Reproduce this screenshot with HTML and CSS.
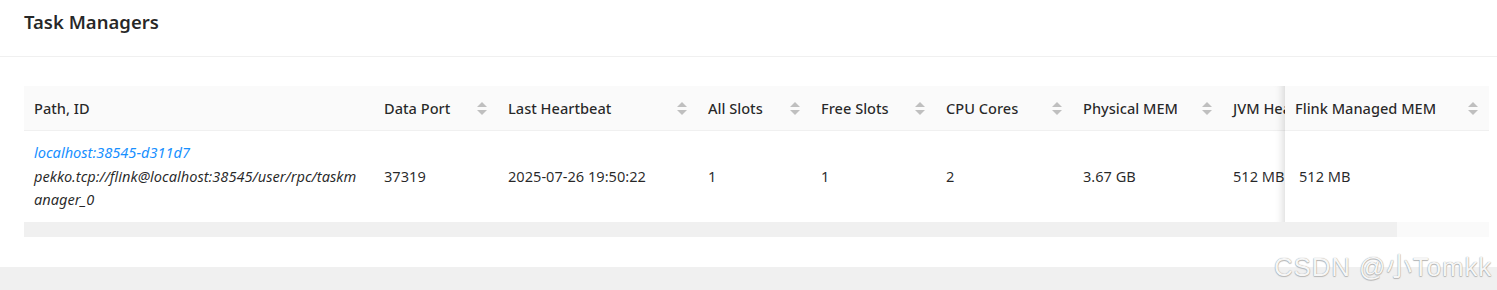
FILE: index.html
```html
<!DOCTYPE html>
<html lang="en">
<head>
<meta charset="utf-8">
<title>Task Managers</title>
<link rel="stylesheet" href="styles.css">
</head>
<body>
<div class="card">
  <div class="card-head"><h2 class="card-title">Task Managers</h2></div>
  <div class="card-body">
    <div class="table-wrap">
      <div class="table-scroll">
        <table class="tm-table">
          <colgroup>
            <col class="c-path"><col class="c-port"><col class="c-hb"><col class="c-all"><col class="c-free"><col class="c-cpu"><col class="c-phys"><col class="c-jvm"><col class="c-flink">
          </colgroup>
          <thead>
            <tr>
              <th><div class="th-in"><span>Path, ID</span></div></th>
              <th><div class="th-in"><span>Data Port</span><span class="sorter"><i class="up"></i><i class="down"></i></span></div></th>
              <th><div class="th-in"><span>Last Heartbeat</span><span class="sorter"><i class="up"></i><i class="down"></i></span></div></th>
              <th><div class="th-in"><span>All Slots</span><span class="sorter"><i class="up"></i><i class="down"></i></span></div></th>
              <th><div class="th-in"><span>Free Slots</span><span class="sorter"><i class="up"></i><i class="down"></i></span></div></th>
              <th><div class="th-in"><span>CPU Cores</span><span class="sorter"><i class="up"></i><i class="down"></i></span></div></th>
              <th><div class="th-in"><span>Physical MEM</span><span class="sorter"><i class="up"></i><i class="down"></i></span></div></th>
              <th><div class="th-in"><span>JVM Heap Size</span><span class="sorter"><i class="up"></i><i class="down"></i></span></div></th>
              <th class="fix-right"><div class="th-in"><span>Flink Managed MEM</span><span class="sorter"><i class="up"></i><i class="down"></i></span></div></th>
            </tr>
          </thead>
          <tbody>
            <tr>
              <td class="path"><a class="tm-link">localhost:38545-d311d7</a><div class="tm-addr">pekko.tcp://flink@localhost:38545/user/rpc/taskmanager_0</div></td>
              <td>37319</td>
              <td>2025-07-26 19:50:22</td>
              <td>1</td>
              <td>1</td>
              <td>2</td>
              <td>3.67 GB</td>
              <td>512 MB</td>
              <td class="fix-right">512 MB</td>
            </tr>
          </tbody>
        </table>
      </div>
      <div class="hscroll"><div class="hscroll-thumb"></div></div>
    </div>
  </div>
</div>
<div class="watermark">CSDN @小Tomkk</div>
</body>
</html>
```

FILE: styles.css
```css
html, body {
  margin: 0;
  padding: 0;
}
body {
  background: #f0f0f0;
  font-family: "Noto Sans", "Open Sans", sans-serif;
  color: rgba(0, 0, 0, 0.85);
  width: 1497px;
  height: 290px;
  overflow: hidden;
  position: relative;
}
.card {
  background: #fff;
  width: 1497px;
}
.card-head {
  height: 57px;
  border-bottom: 1px solid #f0f0f0;
  display: flex;
  align-items: center;
  padding: 0 24px;
  box-sizing: border-box;
}
.card-title {
  margin: 0;
  font-size: 18.5px;
  font-weight: 600;
  color: rgba(0, 0, 0, 0.85);
  line-height: 1;
  padding-bottom: 11px;
}
.card-body {
  padding: 29px 8px 30px 24px;
}
.table-wrap {
  width: 1465px;
}
.table-scroll {
  overflow: hidden;
  width: 100%;
}
.tm-table {
  table-layout: fixed;
  border-collapse: separate;
  border-spacing: 0;
  width: 1553px;
  font-size: 14.6px;
  line-height: 23.5px;
}
.c-path { width: 350px; }
.c-port { width: 124px; }
.c-hb { width: 200px; }
.c-all { width: 113px; }
.c-free { width: 125px; }
.c-cpu { width: 137px; }
.c-phys { width: 150px; }
.c-jvm { width: 150px; }
.c-flink { width: 204px; }

.tm-table th {
  background: #fafafa;
  font-weight: 500;
  text-align: left;
  padding: 10px 10px;
  line-height: 24px;
  border-bottom: 1px solid #f0f0f0;
  position: relative;
  white-space: nowrap;
  overflow: hidden;
}
.tm-table th + th::before {
  content: "";
  position: absolute;
  left: -1px;
  top: 50%;
  width: 1px;
  height: 23px;
  transform: translateY(-50%);
  background: rgba(0, 0, 0, 0.06);
}
.th-in {
  display: flex;
  align-items: center;
  justify-content: space-between;
}
.sorter {
  display: flex;
  flex-direction: column;
  align-items: center;
  gap: 3px;
  width: 10px;
  margin-right: 1px;
  flex: none;
}
.sorter i {
  display: block;
  width: 0;
  height: 0;
  border-left: 5px solid transparent;
  border-right: 5px solid transparent;
}
.sorter .up { border-bottom: 5px solid #bfbfbf; }
.sorter .down { border-top: 5px solid #bfbfbf; }

.tm-table td {
  padding: 10px 10px;
  vertical-align: middle;
  background: #fff;
  white-space: nowrap;
  overflow: hidden;
}
.tm-table td.path {
  white-space: normal;
  font-style: italic;
  overflow-wrap: anywhere;
}
.tm-link {
  color: #1890ff;
  display: block;
}
.tm-addr {
  word-break: break-all;
}
.tm-table .fix-right {
  position: sticky;
  right: 0;
  z-index: 2;
  overflow: visible;
}
.tm-table td.fix-right {
  padding-left: 14px;
}
.tm-table .fix-right::before {
  display: none;
}
.tm-table .fix-right::after {
  content: "";
  position: absolute;
  top: 0;
  bottom: -1px;
  left: 0;
  width: 30px;
  transform: translateX(-100%);
  box-shadow: inset -10px 0 8px -8px rgba(0, 0, 0, 0.15);
  pointer-events: none;
}
.hscroll {
  height: 15px;
  background: #fafafa;
}
.hscroll-thumb {
  width: 1373px;
  height: 100%;
  background: #f0f0f0;
}
.watermark {
  position: absolute;
  right: 5px;
  bottom: 7px;
  font-family: "Liberation Sans", "Noto Sans CJK SC", sans-serif;
  font-size: 26px;
  color: #f6f6f6;
  text-shadow: 0 0 1px #8a8a8a, 0 1px 1px #bbb;
  letter-spacing: 0.8px;
}
```
